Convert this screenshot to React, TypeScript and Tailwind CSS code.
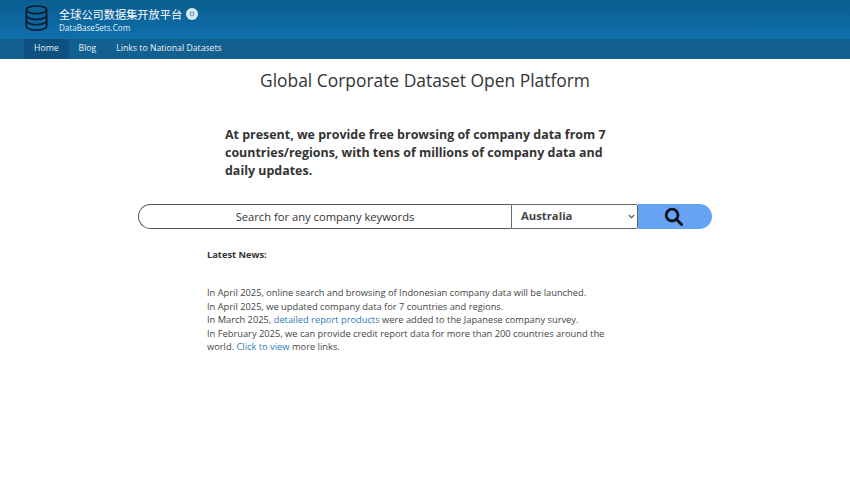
const navItems = ['Home', 'Blog', 'Links to National Datasets'];

const DatabaseLogo = () => (
  <svg width="25" height="28" viewBox="0 0 26 28" fill="none" stroke="#0b1a2a" strokeWidth="1.7">
    <ellipse cx="13" cy="5.5" rx="10.5" ry="4" />
    <path d="M2.5 5.5v17c0 2.2 4.7 4 10.5 4s10.5-1.8 10.5-4v-17" />
    <path d="M2.5 11.5c0 2.2 4.7 4 10.5 4s10.5-1.8 10.5-4" />
    <path d="M2.5 17c0 2.2 4.7 4 10.5 4s10.5-1.8 10.5-4" />
  </svg>
);

const DiscIcon = () => (
  <svg width="12" height="12" viewBox="0 0 12 12">
    <circle cx="6" cy="6" r="6" fill="#dbe9f2" />
    <circle cx="6" cy="6" r="2.4" fill="#6aa6cc" />
    <circle cx="6" cy="6" r="1" fill="#ffffff" />
  </svg>
);

const SearchGlyph = () => (
  <svg width="19" height="19" viewBox="0 0 20 20" fill="none" stroke="#0a1018" strokeWidth="3">
    <circle cx="8.5" cy="8.5" r="6.2" />
    <path d="M13 13l5.5 5.5" strokeLinecap="round" />
  </svg>
);

export default function App() {
  return (
    <div className="min-h-[478px] bg-white font-['Open_Sans',sans-serif] text-[#333]">
      <header className="h-[39px] bg-gradient-to-b from-[#0a5d90] to-[#0f70ac] pl-[24px] flex items-start">
        <div className="mt-[4px] w-[26px]"><DatabaseLogo /></div>
        <div className="ml-[9px] text-white">
          <div className="mt-[5px] h-[18px] flex items-center gap-[4px] text-[11.2px] leading-[18px] font-['Noto_Sans_CJK_SC',sans-serif]">
            <span>全球公司数据集开放平台</span>
            <DiscIcon />
          </div>
          <div className="-mt-[2px] text-[8.1px] leading-[13px] text-[#e3eef6]">DataBaseSets.Com</div>
        </div>
      </header>

      <nav className="h-[20px] bg-[#12608f] pl-[24px] flex text-[8.7px] text-[#e8f0f5]">
        {navItems.map((item, i) => (
          <a key={item} className={`h-full flex items-center px-[10px] ${i === 0 ? 'bg-[#0e5080]' : ''}`}>
            {item}
          </a>
        ))}
      </nav>

      <h1 className="mt-[8px] text-center text-[17.4px] leading-[26px] text-[#333]">Global Corporate Dataset Open Platform</h1>

      <p className="mt-[33px] ml-[225px] w-[395px] text-[12.45px] leading-[18px] font-bold text-[#333]">
        At present, we provide free browsing of company data from 7 countries/regions, with tens of millions of company data and daily updates.
      </p>

      <form className="mt-[24px] ml-[138px] flex h-[25px] w-[574px]">
        <input
          readOnly
          value="Search for any company keywords"
          className="w-[373px] h-full border border-[#555] border-r-0 rounded-l-[13px] text-center text-[11.2px] text-[#333] outline-none"
        />
        <div className="relative w-[127px] h-full">
          <select className="block w-full h-full appearance-none border border-[#666] rounded-r-[2px] bg-white pl-[9px] text-[11.3px] font-bold text-[#444] outline-none">
            <option>Australia</option>
          </select>
          <svg width="7" height="5" viewBox="0 0 7 5" fill="none" stroke="#555" strokeWidth="1.1" className="absolute right-[3px] top-[10px] pointer-events-none">
            <path d="M0.8 1l2.7 2.7L6.2 1" />
          </svg>
        </div>
        <button type="button" className="flex-1 h-full bg-[#66a3f5] rounded-r-[13px] flex items-center justify-center pr-[3px]">
          <SearchGlyph />
        </button>
      </form>

      <div className="mt-[19px] ml-[207px] w-[400px] text-[9.3px] leading-[13.4px] text-[#444]">
        <p className="font-bold text-[#333]">Latest News:</p>
        <div className="mt-[25px]">
          <p>In April 2025, online search and browsing of Indonesian company data will be launched.</p>
          <p>In April 2025, we updated company data for 7 countries and regions.</p>
          <p>In March 2025, <a className="text-[#337ab7]">detailed report products</a> were added to the Japanese company survey.</p>
          <p>In February 2025, we can provide credit report data for more than 200 countries around the world. <a className="text-[#337ab7]">Click to view</a> more links.</p>
        </div>
      </div>
    </div>
  );
}
